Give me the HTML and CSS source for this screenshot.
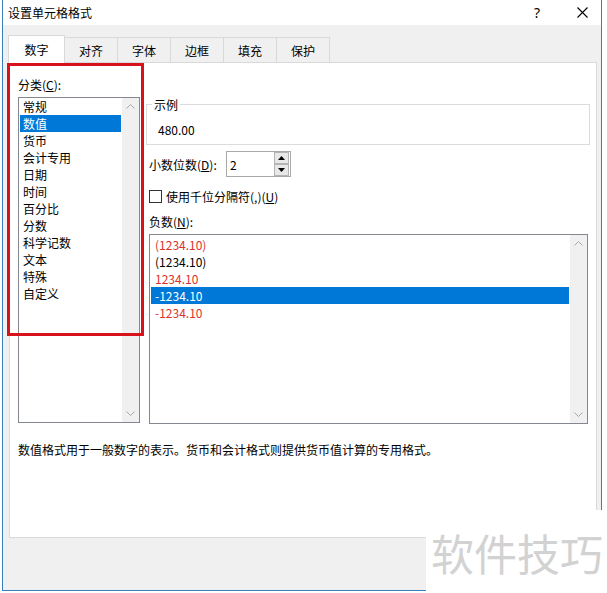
FILE: index.html
```html
<!DOCTYPE html>
<html lang="zh-CN">
<head>
    <meta charset="UTF-8">
    <title>设置单元格格式</title>
    <link rel="stylesheet" href="styles.css">
</head>
<body>
    <div class="dialog">
        <div class="titlebar">
            <span class="title">设置单元格格式</span>
            <span class="help">?</span>
            <span class="close">
                <svg width="11" height="11" viewBox="0 0 11 11"><path d="M0.5 0.5 L10.5 10.5 M10.5 0.5 L0.5 10.5" stroke="#000" stroke-width="1.1" fill="none"/></svg>
            </span>
        </div>
        <div class="dialog-body">
            <div class="tabs">
                <div class="tab active">数字</div>
                <div class="tab">对齐</div>
                <div class="tab">字体</div>
                <div class="tab">边框</div>
                <div class="tab">填充</div>
                <div class="tab">保护</div>
            </div>
            <div class="panel">
                <div class="columns">
                    <div class="category">
                        <div class="label">分类(<u>C</u>):</div>
                        <div class="listbox category-list">
                            <ul class="items">
                                <li>常规</li>
                                <li class="selected">数值</li>
                                <li>货币</li>
                                <li>会计专用</li>
                                <li>日期</li>
                                <li>时间</li>
                                <li>百分比</li>
                                <li>分数</li>
                                <li>科学记数</li>
                                <li>文本</li>
                                <li>特殊</li>
                                <li>自定义</li>
                            </ul>
                            <div class="scrollbar">
                                <svg width="9" height="5" viewBox="0 0 9 5"><polyline points="0.5,4.5 4.5,0.5 8.5,4.5" stroke="#a6a6a6" fill="none"/></svg>
                                <svg width="9" height="5" viewBox="0 0 9 5"><polyline points="0.5,0.5 4.5,4.5 8.5,0.5" stroke="#a6a6a6" fill="none"/></svg>
                            </div>
                        </div>
                    </div>
                    <div class="options">
                        <fieldset class="sample">
                            <legend>示例</legend>
                            <div>480.00</div>
                        </fieldset>
                        <div class="decimal-row">
                            <span class="decimal-label">小数位数(<u>D</u>):</span>
                            <div class="spinner">
                                <span>2</span>
                                <div class="spin-buttons">
                                    <span class="spin-btn"><svg width="7" height="4" viewBox="0 0 7 4"><polygon points="0,4 3.5,0 7,4" fill="#000"/></svg></span>
                                    <span class="spin-btn"><svg width="7" height="4" viewBox="0 0 7 4"><polygon points="0,0 3.5,4 7,0" fill="#000"/></svg></span>
                                </div>
                            </div>
                        </div>
                        <div class="check-row">
                            <span class="checkbox"></span>
                            <span>使用千位分隔符(,)(<u>U</u>)</span>
                        </div>
                        <div class="label">负数(<u>N</u>):</div>
                        <div class="listbox negative-list">
                            <ul class="items">
                                <li class="red">(1234.10)</li>
                                <li>(1234.10)</li>
                                <li class="red">1234.10</li>
                                <li class="selected">-1234.10</li>
                                <li class="red">-1234.10</li>
                            </ul>
                            <div class="scrollbar">
                                <svg width="9" height="5" viewBox="0 0 9 5"><polyline points="0.5,4.5 4.5,0.5 8.5,4.5" stroke="#a6a6a6" fill="none"/></svg>
                                <svg width="9" height="5" viewBox="0 0 9 5"><polyline points="0.5,0.5 4.5,4.5 8.5,0.5" stroke="#a6a6a6" fill="none"/></svg>
                            </div>
                        </div>
                    </div>
                </div>
                <p class="description">数值格式用于一般数字的表示。货币和会计格式则提供货币值计算的专用格式。</p>
            </div>
        </div>
    </div>
    <div class="highlight"></div>
    <div class="watermark">软件技巧</div>
</body>
</html>
```

FILE: styles.css
```css
body {
    margin: 0;
    width: 607px;
    height: 593px;
    overflow: hidden;
    position: relative;
    background-color: #fff;
    font-family: "Noto Sans CJK SC", "Noto Sans", sans-serif;
    font-size: 12px;
    color: #000;
}

u {
    text-decoration: underline;
    text-underline-offset: 1px;
}

.dialog {
    margin-left: 2px;
    width: 600px;
    height: 591px;
    box-sizing: border-box;
    border: 1px solid #3a7fba;
    border-top: none;
    background-color: #f0f0f0;
    display: flex;
    flex-direction: column;
}

.titlebar {
    height: 25px;
    background-color: #fff;
    display: flex;
    align-items: center;
    padding-left: 5px;
}

.title {
    flex: 1;
    line-height: 17px;
}

.help {
    width: 34px;
    margin-right: 9px;
    text-align: center;
    font-family: "Noto Sans", sans-serif;
    font-size: 14px;
}

.close {
    width: 38px;
    display: flex;
    justify-content: center;
}

.dialog-body {
    flex: 1;
    padding: 12px 0 0 6px;
}

.tabs {
    display: flex;
    align-items: flex-end;
    height: 25px;
}

.tab {
    box-sizing: border-box;
    width: 54px;
    height: 25px;
    margin-left: -1px;
    border: 1px solid #d9d9d9;
    border-bottom: none;
    background-color: #f0f0f0;
    display: flex;
    align-items: center;
    justify-content: center;
}

.tab.active {
    width: 57px;
    height: 28px;
    margin-bottom: -1px;
    position: relative;
    z-index: 1;
    background-color: #fff;
}

.panel {
    box-sizing: border-box;
    width: 588px;
    height: 476px;
    background-color: #fff;
    border: 1px solid #d9d9d9;
    padding: 13px 6px 0 8px;
}

.columns {
    display: grid;
    grid-template-columns: 122px 1fr;
    column-gap: 6px;
}

.label {
    line-height: 17px;
}

.listbox {
    box-sizing: border-box;
    border: 1px solid #828790;
    display: flex;
}

.category-list {
    margin-top: 4px;
    height: 326px;
}

.items {
    list-style: none;
    margin: 0;
    padding: 0 1px;
    flex: 1;
}

.items li {
    height: 17px;
    line-height: 17px;
    padding-left: 3px;
    white-space: nowrap;
}

.items li.selected {
    background-color: #0078d7;
    color: #fff;
}

.items li.red {
    color: #e0302b;
}

.scrollbar {
    width: 17px;
    background-color: #f0f0f0;
    display: flex;
    flex-direction: column;
    justify-content: space-between;
    align-items: center;
    padding: 6px 0;
}

.sample {
    margin: 20px 0 0;
    padding: 8px 11px 6px;
    border: 1px solid #dcdcdc;
    min-width: 0;
    line-height: 17px;
}

.sample legend {
    padding: 0 2px;
    margin-left: -6px;
    line-height: 17px;
}

.decimal-row {
    display: flex;
    align-items: center;
    margin-top: 6px;
    padding-left: 3px;
}

.decimal-label {
    width: 77px;
    line-height: 17px;
}

.spinner {
    box-sizing: border-box;
    width: 65px;
    height: 26px;
    border: 1px solid #a9a9a9;
    display: flex;
    align-items: center;
    padding-left: 3px;
}

.spin-buttons {
    margin-left: auto;
    margin-right: 1px;
    width: 15px;
    height: 24px;
    display: flex;
    flex-direction: column;
}

.spin-btn {
    box-sizing: border-box;
    flex: 1;
    border: 1px solid #b4b4b4;
    background-color: #e8e8e8;
    display: flex;
    align-items: center;
    justify-content: center;
}

.check-row {
    display: flex;
    align-items: center;
    height: 17px;
    margin-top: 11px;
    padding-left: 3px;
}

.checkbox {
    box-sizing: border-box;
    width: 13px;
    height: 13px;
    border: 1px solid #333;
    margin-right: 4px;
}

.options .label {
    margin-top: 8px;
    padding-left: 3px;
}

.negative-list {
    margin: 4px 2px 0 3px;
    height: 190px;
}

.negative-list .items {
    padding-top: 1px;
}

.negative-list .items li {
    padding-left: 4px;
}

.description {
    margin: 17px 0 0;
    line-height: 17px;
}

.highlight {
    position: absolute;
    left: 7px;
    top: 63px;
    width: 137px;
    height: 273px;
    box-sizing: border-box;
    border: 3px solid #d8121b;
}

.watermark {
    position: absolute;
    left: 426px;
    top: 510px;
    right: 0;
    bottom: 0;
    background-color: #fff;
    color: #d2d2d2;
    font-size: 43px;
    display: flex;
    align-items: center;
    padding-left: 5px;
}
```
